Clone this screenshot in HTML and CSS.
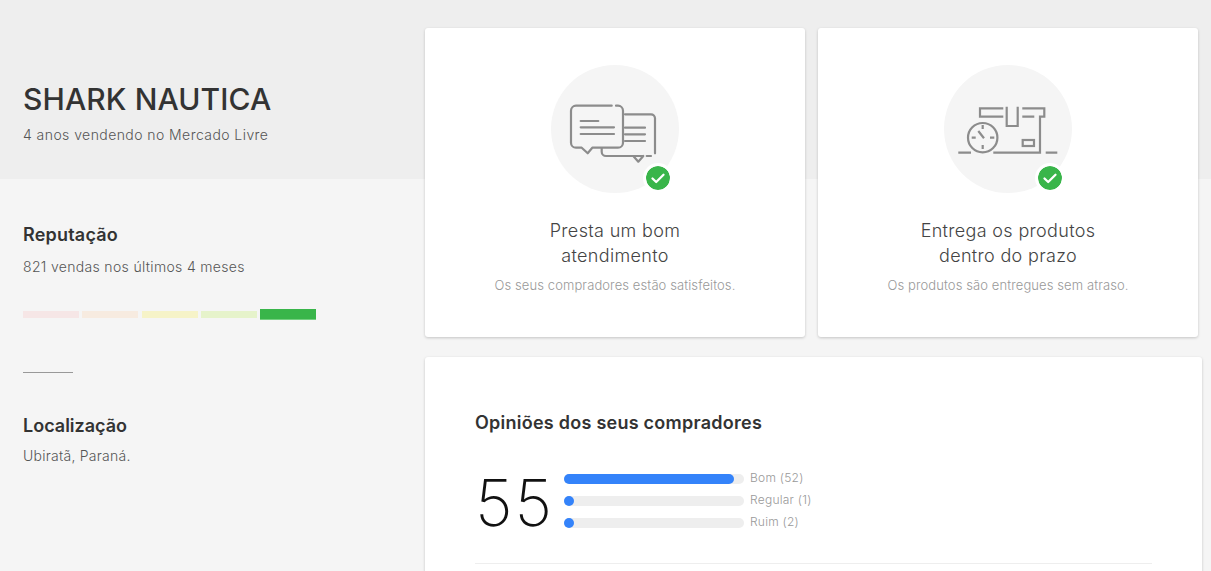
FILE: index.html
```html
<!DOCTYPE html>
<html lang="pt-BR">
<head>
<meta charset="utf-8">
<title>SHARK NAUTICA</title>
<link rel="stylesheet" href="styles.css">
</head>
<body>
<div class="page">
  <aside class="side">
    <header class="seller">
      <h1 class="seller-name">SHARK NAUTICA</h1>
      <p class="seller-sub">4 anos vendendo no Mercado Livre</p>
    </header>
    <section class="rep">
      <h2 class="side-title">Reputação</h2>
      <p class="side-text side-text-rep">821 vendas nos últimos 4 meses</p>
      <div class="thermo">
        <span class="lvl lvl-1"></span>
        <span class="lvl lvl-2"></span>
        <span class="lvl lvl-3"></span>
        <span class="lvl lvl-4"></span>
        <span class="lvl lvl-5"></span>
      </div>
    </section>
    <hr class="side-rule">
    <section class="loc">
      <h2 class="side-title side-title-loc">Localização</h2>
      <p class="side-text side-text-loc">Ubiratã, Paraná.</p>
    </section>
  </aside>
  <main class="main">
    <div class="cards">
      <article class="card">
        <div class="badge-wrap">
          <svg class="illus" viewBox="0 0 128 128" fill="none" stroke="#8c8c8c" stroke-width="2.2" stroke-linecap="round" stroke-linejoin="round">
            <path d="M60.7 40.7H25a5 5 0 0 0-5 5v32a5 5 0 0 0 5 5h5.7l6 5.6 4.6-5.6H67a5 5 0 0 0 5-5v-32a5 5 0 0 0-5-5h-2"/>
            <path d="M74 49.3h26a4 4 0 0 1 4 4v35M100 91h-4.300M92.300 91h-10l5 5.700 5-5.700M82.300 91H55a4.300 4.300 0 0 1-4.300-4.300v-3.400"/>
            <path d="M29.700 56h17.600M29.700 62.300H63M29.700 69H63M74 62.700h20M74 69.300h20M74 76h20"/>
          </svg>
          <span class="check">
            <svg viewBox="0 0 24 24" fill="none" stroke="#fff" stroke-width="2.300" stroke-linecap="round" stroke-linejoin="round"><path d="M6.500 12.500l3.700 3.500 7.300-7.200"/></svg>
          </span>
        </div>
        <h3 class="card-title">Presta um bom<br>atendimento</h3>
        <p class="card-sub">Os seus compradores estão satisfeitos.</p>
      </article>
      <article class="card">
        <div class="badge-wrap">
          <svg class="illus" viewBox="0 0 128 128" fill="none" stroke="#8c8c8c" stroke-width="2.200">
            <path d="M59.300 43.300H36v8.400h23.300M62.700 41.700V61h11V41.700M78.300 43.300h22v8.400H96v36H49.300M78.300 51.700h12"/>
            <circle cx="38.700" cy="72.700" r="14.700"/>
            <path d="M38.700 60v4M38.700 80v4M27.700 72.700h4M46 72.700h4.300M34.300 66l5.700 7.300"/>
            <path d="M14.300 87.700H27M101.700 87.700h11.600"/>
            <rect x="78.700" y="75" width="11.300" height="6"/>
          </svg>
          <span class="check check-right">
            <svg viewBox="0 0 24 24" fill="none" stroke="#fff" stroke-width="2.300" stroke-linecap="round" stroke-linejoin="round"><path d="M6.500 12.500l3.700 3.500 7.300-7.200"/></svg>
          </span>
        </div>
        <h3 class="card-title">Entrega os produtos<br>dentro do prazo</h3>
        <p class="card-sub">Os produtos são entregues sem atraso.</p>
      </article>
    </div>
    <section class="opinions">
      <h2 class="op-title">Opiniões dos seus compradores</h2>
      <div class="op-body">
        <div class="op-total">55</div>
        <ul class="op-bars">
          <li class="op-row"><span class="track"><span class="fill" style="width:170px"></span></span><span class="op-label">Bom (52)</span></li>
          <li class="op-row"><span class="track"><span class="fill" style="width:10px"></span></span><span class="op-label">Regular (1)</span></li>
          <li class="op-row"><span class="track"><span class="fill" style="width:10px"></span></span><span class="op-label">Ruim (2)</span></li>
        </ul>
      </div>
      <hr class="op-rule">
    </section>
  </main>
</div>
</body>
</html>
```
FILE: styles.css
```css
* { box-sizing: border-box; }
html, body { margin: 0; height: 571px; overflow: hidden; }
body {
  font-family: "Inter", "Lato", sans-serif;
  color: #333;
  background: linear-gradient(#eeeeee 179px, #f5f5f5 179px);
}
.page { display: flex; align-items: flex-start; height: 571px; overflow: hidden; }
.side { width: 425px; padding-left: 23px; flex: none; }
.seller { height: 179px; padding-top: 83px; }
.seller-name { margin: 0; font-size: 30px; line-height: 32px; font-weight: 500; letter-spacing: .1px; color: #333; }
.seller-sub { margin: 11px 0 0; font-size: 14px; line-height: 18px; font-weight: 300; letter-spacing: .43px; color: #555; }
.rep { padding-top: 45px; }
.side-title { margin: 0; font-size: 18px; line-height: 22px; font-weight: 600; letter-spacing: .2px; color: #333; }
.side-title-loc { letter-spacing: 0; }
.side-text { margin: 10px 0 0; font-size: 14px; line-height: 18px; font-weight: 300; letter-spacing: .33px; color: #555; }
.side-text-rep { margin-top: 12px; }
.side-text-loc { letter-spacing: .25px; }
.thermo { display: flex; align-items: flex-start; gap: 3.25px; margin-top: 33px; height: 11px; }
.lvl { width: 56px; height: 7px; margin-top: 2px; }
.lvl-1 { background: #f6e6e6; }
.lvl-2 { background: #f7ebe0; }
.lvl-3 { background: #f6f3c8; }
.lvl-4 { background: #e6f3cb; }
.lvl-5 { height: 11px; margin-top: 0; background: #39b54a; border-bottom: 1px solid #74cf80; }
.side-rule { width: 50px; height: 1px; margin: 52px 0 0; border: 0; background: #999; }
.loc { padding-top: 42px; }
.main { width: 786px; flex: none; padding-top: 28px; }
.cards { display: flex; gap: 13px; }
.card {
  width: 380px; height: 309px; padding-top: 37px;
  background: #fff; border-radius: 3px;
  box-shadow: 0 1px 3px rgba(0,0,0,.2);
  text-align: center;
}
.badge-wrap { position: relative; width: 128px; height: 128px; margin: 0 auto; border-radius: 50%; background: #f5f5f5; }
.illus { display: block; width: 128px; height: 128px; }
.check {
  position: absolute; right: 6px; bottom: 0;
  width: 30px; height: 30px;
  border-radius: 50%; background: #39b54a; border: 3px solid #fff;
  display: flex; background-clip: padding-box;
}
.check-right { right: 7px; }
.check svg { width: 100%; height: 100%; }
.card-title { margin: 25px 0 0; font-size: 18px; line-height: 25px; font-weight: 300; letter-spacing: .33px; color: #444; }
.card-sub { margin: 8px 0 0; font-size: 13px; line-height: 18px; font-weight: 300; letter-spacing: .1px; color: #999; }
.opinions {
  width: 777px; height: 300px; margin-top: 20px;
  padding: 55px 50px 0;
  background: #fff; border-radius: 3px;
  box-shadow: 0 1px 3px rgba(0,0,0,.2);
}
.op-title { margin: 0; font-size: 18px; line-height: 22px; font-weight: 600; letter-spacing: .25px; color: #333; }
.op-body { display: flex; height: 88px; margin-top: 29px; }
.op-total { width: 89px; font-size: 65px; line-height: 80px; font-weight: 200; letter-spacing: 1.800px; color: #111; }
.op-bars { list-style: none; margin: 0; padding: 11px 0 0; display: flex; flex-direction: column; gap: 12px; }
.op-row { display: flex; align-items: center; height: 10px; }
.track { display: block; width: 180px; height: 10px; border-radius: 5px; background: #eeeeee; }
.fill { display: block; height: 10px; border-radius: 5px; background: #3483fa; }
.op-label { margin: -2px 0 0 6px; font-size: 12px; line-height: 14px; font-weight: 300; letter-spacing: .25px; color: #999; }
.op-rule { width: 677px; height: 1px; margin: 12px 0 0; border: 0; background: #eee; }
```
